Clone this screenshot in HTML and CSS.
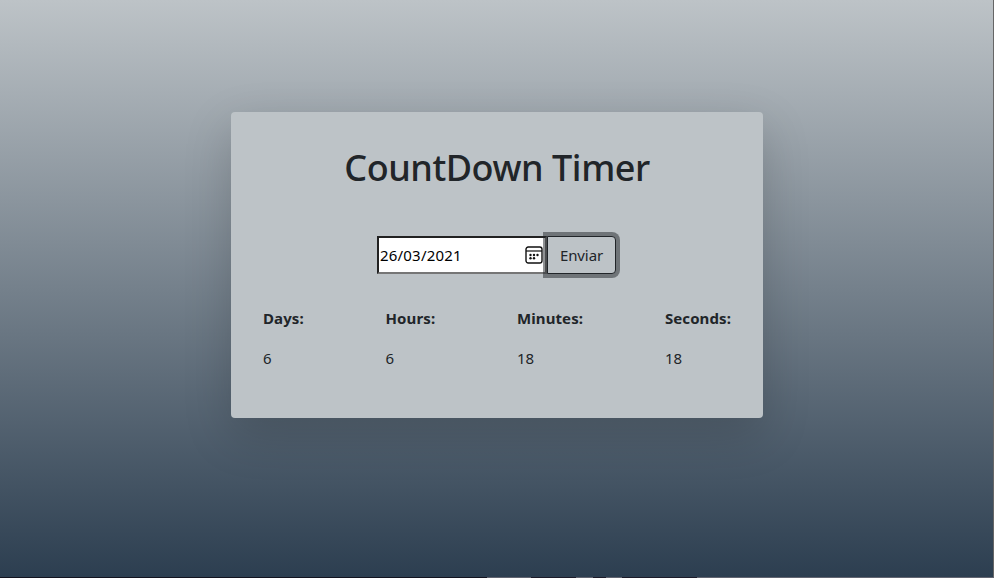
FILE: index.html
```html
<!DOCTYPE html>
<html lang="en">
<head>
<meta charset="utf-8">
<title>CountDown Timer</title>
<link rel="stylesheet" href="styles.css">
</head>
<body>
<main class="card">
  <h1 class="title">CountDown Timer</h1>
  <form class="date-form">
    <div class="date-field"><span class="date-value">26/03/2021</span>
      <svg class="calendar" viewBox="0 0 18 18" width="18" height="18"><rect x="1" y="1" width="16" height="16" rx="2.2" fill="none" stroke="#111" stroke-width="1.4"/><path d="M1 5h16" stroke="#111" stroke-width="1.2"/><g fill="#111"><circle cx="5.5" cy="9" r="1.2"/><circle cx="9" cy="9" r="1.2"/><circle cx="12.5" cy="9" r="1.2"/><circle cx="5.5" cy="12.3" r="1.2"/><circle cx="9" cy="12.3" r="1.2"/></g></svg>
    </div>
    <button class="send" type="button">Enviar</button>
  </form>
  <section class="units">
    <div class="unit"><b class="label">Days:</b><span>6</span></div>
    <div class="unit"><b class="label">Hours:</b><span>6</span></div>
    <div class="unit"><b class="label">Minutes:</b><span>18</span></div>
    <div class="unit"><b class="label">Seconds:</b><span>18</span></div>
  </section>
</main>
<div class="window-edge"></div>
</body>
</html>
```
FILE: styles.css
```css
* { box-sizing: border-box; }
body {
  margin: 0;
  height: 578px;
  padding-top: 112px;
  overflow: hidden;
  font: 16px/24px "Noto Sans", "Open Sans", sans-serif;
  color: #212529;
  background: linear-gradient(#bdc3c7, #2c3e50);
}
.card {
  width: 532px;
  height: 306px;
  margin: 0 auto 0 231px;
  padding: 32px;
  border-radius: 4px;
  background: #bdc3c7;
  box-shadow: 0 16px 48px rgba(0, 0, 0, .176);
}
.title {
  margin: 0;
  font-size: 36px;
  line-height: 48px;
  font-weight: 500;
  letter-spacing: -.45px;
  text-align: center;
}
.date-form { display: flex; justify-content: center; margin-top: 44px; }
.date-field {
  display: flex; align-items: center; justify-content: space-between;
  width: 170px; height: 38px; padding: 0 2px 0 1px;
  border: 2px solid; border-color: #212121 #767676 #767676 #212121;
  background: #fff; color: #000; font-size: 15px;
}
.date-value { letter-spacing: .2px; }
.send {
  width: 69px; height: 38px; margin-right: 1px; padding: 0;
  border: 1px solid #212529; border-radius: 0 4px 4px 0;
  background: #bdc3c7; color: #212529; font: inherit; font-size: 15px;
  letter-spacing: -.1px;
  box-shadow: 0 0 0 4px rgba(33, 37, 41, .5);
}
.units { display: flex; justify-content: space-between; margin-top: 32px; font-size: 15px; }
.unit { display: flex; flex-direction: column; gap: 16px; }
.label { letter-spacing: .1px; }
.window-edge {
  position: absolute;
  inset: 0;
  pointer-events: none;
  background:
    linear-gradient(90deg, #12131f 0 487px, #626571 487px 531px, #1c1b29 531px 576px, #626571 576px 593px, #1c1b29 593px 606px, #626571 606px 622px, #1c1b29 622px 635px, #1c1b29 635px 697px, #626571 697px) bottom / 100% 1px no-repeat,
    linear-gradient(#666, #666) right / 1px 100% no-repeat;
}
```
